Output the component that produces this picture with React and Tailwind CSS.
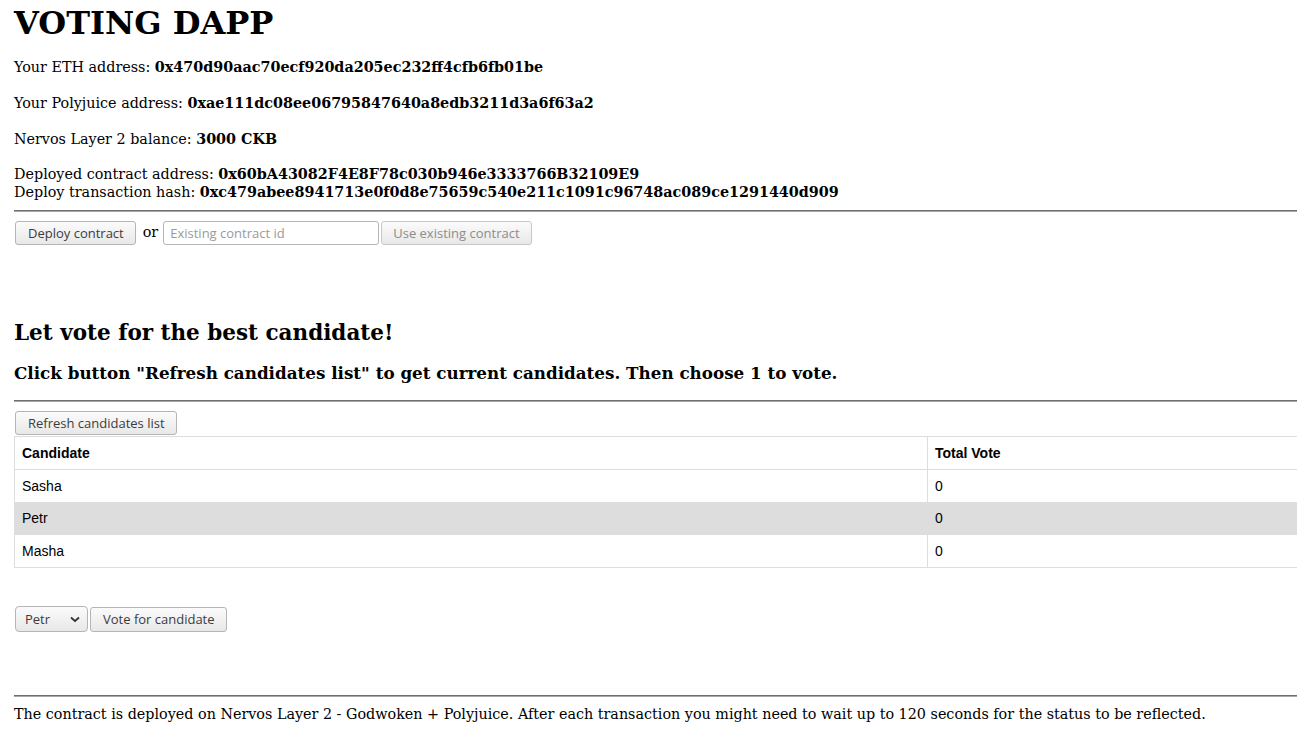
import { useState } from "react";

const serif = { fontFamily: '"DejaVu Serif", serif' };

const btn =
  "h-6 pl-3 pr-[11px] rounded-[3px] border border-[#b5b5b5] bg-gradient-to-b from-[#fbfbfb] to-[#e8e8e8] text-[13px] text-[#3c3c3c] font-['Open_Sans',sans-serif] leading-none";

const Rule = () => (
  <div className="border-t border-b border-t-[#6e6e6e] border-b-[#a8a8a8]" />
);

const candidates = [
  { name: "Sasha", votes: 0, h: "h-[33px]" },
  { name: "Petr", votes: 0, h: "h-[32px]" },
  { name: "Masha", votes: 0, h: "h-[33px]" },
];

export default function App() {
  const [selected, setSelected] = useState("Petr");

  return (
    <div className="overflow-hidden">
      <div className="pl-[14px] text-black text-[14.33px] w-[1320px]" style={serif}>
        {/* ---------------- Header ---------------- */}
        <h1 className="text-[32px] font-bold leading-[37px] pt-[5px]">VOTING DAPP</h1>

        <p className="mt-[16px] leading-[18px]">
          Your ETH address: <b>0x470d90aac70ecf920da205ec232ff4cfb6fb01be</b>
        </p>
        <p className="mt-[18px] leading-[18px]">
          Your Polyjuice address: <b>0xae111dc08ee06795847640a8edb3211d3a6f63a2</b>
        </p>
        <p className="mt-[18px] leading-[18px]">
          Nervos Layer 2 balance: <b>3000 CKB</b>
        </p>
        <p className="mt-[17px] leading-[18px]">
          Deployed contract address: <b>0x60bA43082F4E8F78c030b946e3333766B32109E9</b>
          <br />
          Deploy transaction hash:{" "}
          <b>0xc479abee8941713e0f0d8e75659c540e211c1091c96748ac089ce1291440d909</b>
        </p>

        <div className="mt-[9px] w-[1283px]">
          <Rule />
        </div>

        {/* ---------------- Contract ---------------- */}
        <div className="flex items-center mt-[9px] ml-[1px]">
          <button className={btn}>Deploy contract</button>
          <span className="ml-[7px] mr-[5px]">or</span>
          <input
            placeholder="Existing contract id"
            className="h-6 w-[216px] px-[6px] rounded-[3px] border border-[#b5b5b5] text-[13px] font-['Open_Sans',sans-serif] placeholder:text-[#9a9a9a]"
          />
          <button
            disabled
            className={btn + " ml-[2px] pl-[11px] pr-[10px] text-[#8c8c8c] border-[#c8c8c8]"}
          >
            Use existing contract
          </button>
        </div>

        {/* ---------------- Voting ---------------- */}
        <h2 className="text-[21.5px] font-bold leading-[26px] mt-[75px]">
          Let vote for the best candidate!
        </h2>
        <h3 className="text-[16.75px] font-bold leading-[20px] mt-[17px]">
          Click button "Refresh candidates list" to get current candidates. Then choose 1 to vote.
        </h3>

        <div className="mt-[17px] w-[1283px]">
          <Rule />
        </div>

        <button className={btn + " mt-[9px] ml-[1px]"}>Refresh candidates list</button>

        <table className="w-[1300px] mt-[1px] border-collapse text-[14px] font-['Liberation_Sans',sans-serif]">
          <thead>
            <tr className="h-[33px]">
              <th className="text-left font-bold pl-[7px] border border-[#dddddd] w-[913px]">
                Candidate
              </th>
              <th className="text-left font-bold pl-[7px] border border-[#dddddd]">Total Vote</th>
            </tr>
          </thead>
          <tbody>
            {candidates.map((c) => (
              <tr key={c.name} className={c.h + (c.name === selected ? " bg-[#dddddd]" : "")}>
                <td className="pl-[7px] border border-[#dddddd]">{c.name}</td>
                <td className="pl-[7px] border border-[#dddddd]">{c.votes}</td>
              </tr>
            ))}
          </tbody>
        </table>

        {/* ---------------- Vote ---------------- */}
        <div className="flex items-center mt-[38px] ml-[1px] gap-[2px]">
          <div className="relative">
            <select
              value={selected}
              onChange={(e) => setSelected(e.target.value)}
              className={btn + " appearance-none w-[73px] h-[26px] pl-[9px] pr-6 rounded-[4px]"}
            >
              {candidates.map((c) => (
                <option key={c.name}>{c.name}</option>
              ))}
            </select>
            <svg
              className="absolute right-[8px] top-[10px] pointer-events-none"
              width="10"
              height="7"
              viewBox="0 0 10 7"
            >
              <path d="M1 1.5 L5 5 L9 1.5" stroke="#333" strokeWidth="1.8" fill="none" />
            </svg>
          </div>
          <button className={btn + " h-[25px]"}>Vote for candidate</button>
        </div>

        <div className="mt-[63px] w-[1283px]">
          <Rule />
        </div>
        <p className="mt-[8px] leading-[18px]">
          The contract is deployed on Nervos Layer 2 - Godwoken + Polyjuice. After each transaction
          you might need to wait up to 120 seconds for the status to be reflected.
        </p>
      </div>
    </div>
  );
}
